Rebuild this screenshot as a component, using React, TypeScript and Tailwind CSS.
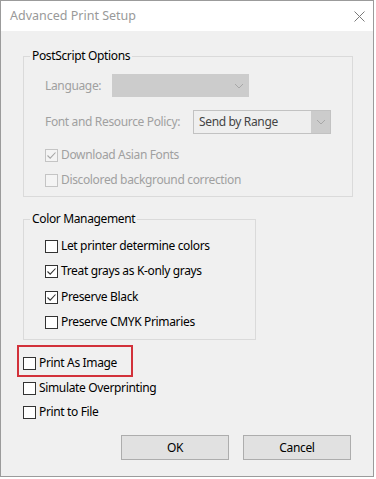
import React from "react";

const ui = "font-['Segoe_UI','Noto_Sans',sans-serif] text-[12px]";

const Chevron = () => (
  <svg viewBox="0 0 10 6" className="h-[6px] w-[10px]">
    <path d="M1 1 L5 5 L9 1" fill="none" stroke="#a8a8a8" strokeWidth="1" />
  </svg>
);

const Check = ({ checked, disabled }: { checked?: boolean; disabled?: boolean }) => (
  <span
    className={
      disabled
        ? "flex h-[13px] w-[13px] shrink-0 items-center justify-center border border-[#c4c4c4] bg-[#f4f4f4]"
        : "flex h-[13px] w-[13px] shrink-0 items-center justify-center border border-[#333333] bg-white"
    }
  >
    {checked && (
      <svg viewBox="0 0 11 11" className="h-[11px] w-[11px]">
        <path
          d="M1.5 5.5 L4.2 8.2 L9.5 2.5"
          fill="none"
          stroke={disabled ? "#a6a6a6" : "#333333"}
          strokeWidth="1.1"
        />
      </svg>
    )}
  </span>
);

const CheckRow = ({
  label,
  checked,
  disabled,
  className = "",
}: {
  label: string;
  checked?: boolean;
  disabled?: boolean;
  className?: string;
}) => (
  <div className={`flex h-[16px] items-center gap-[3px] ${className}`}>
    <Check checked={checked} disabled={disabled} />
    <span className={disabled ? "leading-[16px] text-[#a0a0a0]" : "leading-[16px] text-black"}>{label}</span>
  </div>
);

const App = () => {
  return (
    <div className={`h-[479px] w-[376px] bg-white ${ui}`}>
      <div className="flex h-[477px] w-[374px] flex-col border border-[#9b9b9b] bg-[#f0f0f0]">
        {/* title bar */}
        <div className="flex h-[30px] items-center justify-between bg-white pl-[9px] pr-[8px]">
          <span className="text-[12.5px] text-[#999999]">Advanced Print Setup</span>
          <svg viewBox="0 0 11 11" className="h-[11px] w-[11px]">
            <path d="M0.5 0.5 L10.5 10.5 M10.5 0.5 L0.5 10.5" stroke="#7a7a7a" strokeWidth="1" />
          </svg>
        </div>

        <div className="flex flex-1 flex-col pl-[16px] pt-[17px] tracking-[-0.35px]">
          {/* PostScript Options */}
          <fieldset className="ml-[6px] w-[330px] border border-[#dadada] px-[6px] pb-[8px]">
            <legend className="px-[2px] leading-[16px] text-black">PostScript Options</legend>
            <div className="pl-[15px] pt-[10px]">
              <div className="flex h-[23px] items-center">
                <span className="w-[67px] text-[#a0a0a0]">Language:</span>
                <div className="flex h-[23px] w-[137px] items-center justify-end bg-[#cccccc] pr-[5px]">
                  <Chevron />
                </div>
              </div>
              <div className="mt-[13px] flex h-[24px] items-center">
                <span className="w-[148px] text-[#a0a0a0]">Font and Resource Policy:</span>
                <div className="flex h-[24px] w-[138px] border border-[#c2c2c2] bg-[#cccccc]">
                  <div className="flex flex-1 items-center bg-[#efefef] pl-[5px] text-[#444444]">Send by Range</div>
                  <div className="flex w-[19px] items-center justify-center">
                    <Chevron />
                  </div>
                </div>
              </div>
              <CheckRow className="mt-[13px]" label="Download Asian Fonts" checked disabled />
              <CheckRow className="mt-[9px]" label="Discolored background correction" disabled />
            </div>
          </fieldset>

          {/* Color Management */}
          <fieldset className="ml-[6px] mt-[14px] w-[233px] border border-[#dadada] px-[6px] pb-[9px]">
            <legend className="px-[2px] leading-[16px] text-black">Color Management</legend>
            <div className="pl-[15px] pt-[11px]">
              <CheckRow label="Let printer determine colors" />
              <CheckRow className="mt-[9px]" label="Treat grays as K-only grays" checked />
              <CheckRow className="mt-[10px]" label="Preserve Black" checked />
              <CheckRow className="mt-[9px]" label="Preserve CMYK Primaries" />
            </div>
          </fieldset>

          {/* highlighted option */}
          <div className="mt-[5px] h-[32px] w-[116px] border-2 border-[#d2313a] pl-[4px] pt-[8px]">
            <CheckRow label="Print As Image" />
          </div>
          <CheckRow className="ml-[6px] mt-[3px]" label="Simulate Overprinting" />
          <CheckRow className="ml-[6px] mt-[8px]" label="Print to File" />

          <div className="mt-[15px] flex justify-end gap-[14px] pr-[22px]">
            <button className="h-[25px] w-[108px] border border-[#adadad] bg-[#e1e1e1] text-black">OK</button>
            <button className="h-[25px] w-[108px] border border-[#adadad] bg-[#e1e1e1] text-black">Cancel</button>
          </div>
        </div>
      </div>
    </div>
  );
};

export default App;
